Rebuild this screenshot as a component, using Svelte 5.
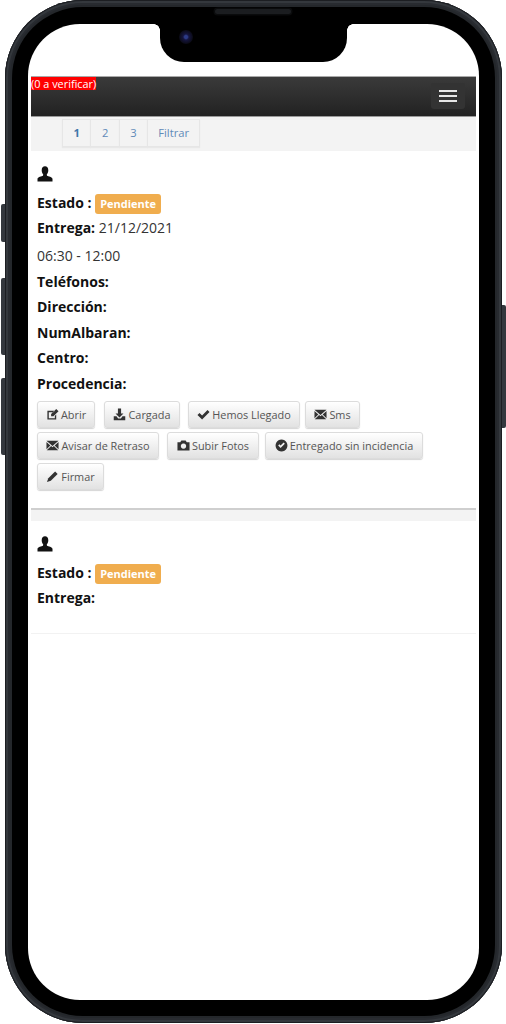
<script>
  const pages = ['1', '2', '3', 'Filtrar'];
  const rows = ['Teléfonos:', 'Dirección:', 'NumAlbaran:', 'Centro:', 'Procedencia:'];
  const buttons = [
    { label: 'Abrir', icon: 'edit', w: 58, gap: 9 },
    { label: 'Cargada', icon: 'download', w: 76, gap: 8 },
    { label: 'Hemos Llegado', icon: 'check', w: 112, gap: 5 },
    { label: 'Sms', icon: 'mail', w: 55, gap: 40 },
    { label: 'Avisar de Retraso', icon: 'mail', w: 122, gap: 8 },
    { label: 'Subir Fotos', icon: 'camera', w: 92, gap: 6 },
    { label: 'Entregado sin incidencia', icon: 'ok', w: 158, gap: 8 },
    { label: 'Firmar', icon: 'pencil', w: 67, gap: 8 }
  ];
  const icons = {
    edit: 'M1.500 3h8L8 4.500H3v6.500h6.500V8.500L11 7v5.500H1.500z M5.500 6.500L11 1l2.500 2.500L8 9H5.500z',
    download: 'M5.300 .5h3.400v5.500h2.600L7 10.200 2.700 6h2.600z M.8 9h3l1.700 2.200h3L10.200 9h3v4.300H.8z',
    check: 'M.5 7.500l2.200-2.200 2.800 2.700L11.300 2.200l2.200 2.200-8 8z',
    mail: 'M.5 2h13L7 7.500z M.5 3.300l4.200 3.600L.5 11z M13.500 3.300L9.300 6.900l4.200 4.100z M5.500 7.600L7 8.900l1.500-1.300 4.700 4.400H.8z',
    camera: 'M.5 3.500h3l1.200-2h4.600l1.200 2h3v9h-13z M7 4.800a2.900 2.900 0 1 0 .01 0z',
    ok: 'M7 .6a6.400 6.400 0 1 0 .01 0z M3.400 7l2.600 2.600 4.600-4.600-1.300-1.300-3.300 3.300-1.300-1.300z',
    pencil: 'M9.800 1.500l2.700 2.700-7.300 7.300L1 13l1.500-4.200z'
  };
</script>

{#snippet user()}
  <svg class="user" viewBox="0 0 16 16" aria-hidden="true">
    <path d="M8 .3c2 0 3.300 1.600 3.300 3.900 0 1.600-.6 3.100-1.300 3.900-.3.400-.3 1.300.1 1.600 1 .7 5.400 1.200 5.400 3.200v2.700H.5V12.900c0-2 4.400-2.500 5.400-3.200.4-.3.400-1.200.1-1.600C5.300 7.300 4.700 5.800 4.700 4.200 4.700 1.900 6 .3 8 .3z" />
  </svg>
{/snippet}

{#snippet estado()}
  <div class="line estado"><b>Estado :</b> <span class="badge">Pendiente</span></div>
{/snippet}

<div class="device">
  <span class="side vol0"></span>
  <span class="side vol1"></span>
  <span class="side vol2"></span>
  <span class="side power"></span>
  <div class="bezel">
    <div class="notch">
      <span class="speaker"></span>
      <span class="camera"></span>
    </div>
    <div class="screen">
      <header class="nav">
        <span class="alert">(0 a verificar)</span>
        <button class="toggle" aria-label="Menu"><i></i><i></i><i></i></button>
      </header>
      <nav class="pager">
        <ul>
          {#each pages as p, i}
            <li class:active={i === 0}>{p}</li>
          {/each}
        </ul>
      </nav>

      <section class="card">
        {@render user()}
        {@render estado()}
        <div class="line entrega"><b>Entrega:</b> 21/12/2021</div>
        <div class="line time">06:30 - 12:00</div>
        {#each rows as r}
          <div class="line row"><b>{r}</b></div>
        {/each}
        <div class="actions">
          {#each buttons as btn}
            <button class="btn" style="width:{btn.w}px;margin-right:{btn.gap}px">
              <svg viewBox="0 0 14 14" aria-hidden="true"><path fill-rule="evenodd" d={icons[btn.icon]} /></svg>
              {btn.label}
            </button>
          {/each}
        </div>
      </section>

      <div class="divider"></div>

      <section class="card second">
        {@render user()}
        {@render estado()}
        <div class="line entrega"><b>Entrega:</b></div>
      </section>
    </div>
  </div>
</div>

<style>
  :global(body) {
    margin: 0;
    background: #fff;
    font-family: "Open Sans", "Liberation Sans", sans-serif;
  }
  .device {
    position: relative;
    box-sizing: border-box;
    width: 497px;
    height: 1023px;
    margin-left: 5px;
    padding: 7px;
    border-radius: 78px;
    background: #24272b;
    box-shadow: inset 0 0 0 1px #1c1e22, inset 0 0 0 3px #34383d, inset 0 0 0 5px #282b30;
  }
  .side {
    position: absolute;
    width: 4px;
    background: #34383e;
  }
  .vol0 { left: -4px; top: 204px; height: 38px; border-radius: 2px 0 0 2px; }
  .vol1 { left: -4px; top: 278px; height: 77px; border-radius: 2px 0 0 2px; }
  .vol2 { left: -4px; top: 378px; height: 77px; border-radius: 2px 0 0 2px; }
  .power { right: -4px; top: 305px; height: 123px; border-radius: 0 2px 2px 0; }
  .bezel {
    position: relative;
    box-sizing: border-box;
    height: 1009px;
    padding: 17px 16px;
    border-radius: 71px;
    background: #000;
  }
  .notch {
    position: absolute;
    z-index: 2;
    left: 148px;
    top: 17px;
    width: 187px;
    height: 38px;
    background: #000;
    border-radius: 0 0 24px 24px;
  }
  .notch::before,
  .notch::after {
    content: "";
    position: absolute;
    top: 0;
    width: 6px;
    height: 6px;
  }
  .notch::before {
    left: -6px;
    background: radial-gradient(circle at 0 100%, transparent 5.500px, #000 6px);
  }
  .notch::after {
    right: -6px;
    background: radial-gradient(circle at 100% 100%, transparent 5.500px, #000 6px);
  }
  .speaker {
    position: absolute;
    left: 55px;
    top: -15px;
    width: 76px;
    height: 5px;
    border-radius: 3px;
    background: #1b1d20;
    box-shadow: 0 0 0 1.500px #0a0b0c;
  }
  .camera {
    position: absolute;
    left: 19px;
    top: 6px;
    width: 14px;
    height: 14px;
    border-radius: 50%;
    background: radial-gradient(circle, #2c3a86 0 1.500px, #15153f 3px, #0a0a14 7px);
  }
  .screen {
    box-sizing: border-box;
    width: 451px;
    height: 976px;
    padding: 52px 3px 0;
    background: #fff;
    border-radius: 52px;
    overflow: hidden;
  }
  .nav {
    position: relative;
    box-sizing: border-box;
    height: 41px;
    background: linear-gradient(#3a3a3a, #222);
    border-top: 1px solid #a9a9a9;
    border-bottom: 1px solid #9a9a9a;
  }
  .alert {
    display: block;
    width: fit-content;
    background: #f00;
    color: #fff;
    font-size: 10.900px;
    line-height: 13px;
  }
  .toggle {
    position: absolute;
    right: 11px;
    top: 6px;
    display: flex;
    flex-direction: column;
    gap: 3px;
    align-items: center;
    justify-content: center;
    box-sizing: border-box;
    width: 34px;
    height: 26px;
    padding: 0;
    border: 0;
    border-radius: 3px;
    background: #333;
  }
  .toggle i {
    display: block;
    width: 18px;
    height: 2px;
    background: #e6e6e6;
  }
  .pager {
    box-sizing: border-box;
    height: 34px;
    padding: 2px 0 0 32px;
    background: #f3f3f3;
  }
  .pager ul {
    display: flex;
    margin: 0;
    padding: 0;
    list-style: none;
  }
  .pager li {
    box-sizing: border-box;
    height: 28px;
    padding: 0 10.500px;
    border: 1px solid #e6e6e6;
    margin-left: -1px;
    background: #f3f3f3;
    color: #5f8ab8;
    font-size: 11.200px;
    line-height: 26px;
    box-shadow: 0 1px 1px #e8e8e8;
  }
  .pager li:last-child {
    padding: 0 10px;
  }
  .pager li.active {
    color: #3f78aa;
    font-weight: 700;
  }
  .card {
    padding: 15px 6px 0;
    color: #111;
    font-size: 14px;
  }
  .second {
    padding-bottom: 23px;
    border-bottom: 1px solid #f2f2f2;
  }
  .user {
    display: block;
    width: 16px;
    height: 16px;
    fill: #111;
  }
  .line {
    height: 25.500px;
    line-height: 25.500px;
    white-space: nowrap;
    color: #333;
  }
  .line b { color: #111; font-weight: 700; }
  .estado { margin-top: 8px; height: 25px; }
  .entrega { height: 26px; }
  .second .entrega { height: 25px; }
  .time { height: 27.500px; line-height: 30px; }
  .badge {
    display: inline-block;
    box-sizing: border-box;
    width: 66px;
    height: 20px;
    vertical-align: 0;
    border-radius: 3px;
    background: #f0ad4e;
    color: #fff;
    font-size: 11px;
    font-weight: 700;
    line-height: 19px;
    text-align: center;
  }
  .actions {
    display: flex;
    flex-wrap: wrap;
    row-gap: 4px;
    width: 400px;
    margin-top: 5px;
  }
  .btn {
    display: inline-flex;
    align-items: center;
    justify-content: center;
    gap: 2px;
    box-sizing: border-box;
    height: 27px;
    padding: 0;
    border: 1px solid #dcdcdc;
    border-radius: 3px;
    background: linear-gradient(#fff, #e2e2e2);
    box-shadow: 0 1px 1px #d5d5d5;
    color: #555;
    font-family: inherit;
    font-size: 10.900px;
    white-space: nowrap;
  }
  .btn svg {
    width: 13px;
    height: 13px;
    fill: #333;
  }
  .divider {
    height: 11px;
    margin-top: 18px;
    border-top: 2px solid #cfcfcf;
    background: #f3f3f3;
  }
</style>
